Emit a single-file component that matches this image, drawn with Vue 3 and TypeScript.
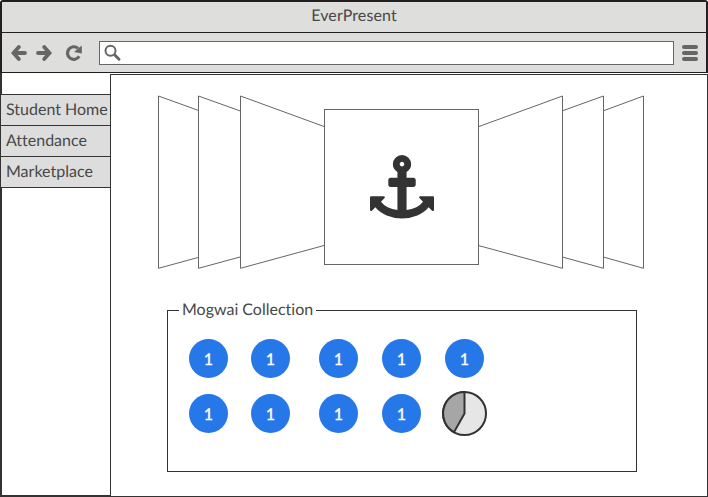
<script setup lang="ts">
import { ref } from 'vue'

interface Mogwai {
  id: number
  count: number
}

const title = ref('EverPresent')
const address = ref('')
const menu: string[] = ['Student Home', 'Attendance', 'Marketplace']
const mogwais: Mogwai[] = Array.from({ length: 9 }, (_, i) => ({ id: i, count: 1 }))
</script>

<template>
  <div class="browser">
    <header class="titlebar">{{ title }}</header>
    <div class="toolbar">
      <svg class="nav" width="17" height="18" viewBox="0 0 17 18">
        <path d="M7.800 3 L2.500 9 L7.800 15 M3 9 H14" />
      </svg>
      <svg class="nav forward" width="17" height="18" viewBox="0 0 17 18">
        <path d="M8.200 3 L13.500 9 L8.200 15 M13 9 H2" />
      </svg>
      <svg class="reload" width="18" height="18" viewBox="0 0 18 18">
        <path class="arc" d="M13 4.400 A6.300 6.300 0 1 0 14.200 12.200" />
        <path class="tip" d="M16.800 1.500 V9.500 L9 8 Z" />
      </svg>
      <label class="address">
        <svg width="18" height="18" viewBox="0 0 18 18">
          <circle cx="6.500" cy="6.800" r="5" />
          <path d="M10.800 11 L15 15.200" />
        </svg>
        <input v-model="address" type="text" />
      </label>
      <div class="burger"><i /><i /><i /></div>
    </div>
    <div class="body">
      <nav class="sidebar">
        <a v-for="item in menu" :key="item">{{ item }}</a>
      </nav>
      <main class="panel">
        <svg class="carousel" width="488" height="176" viewBox="157 94 488 176">
          <g class="card">
            <path d="M198 110.300 L158.500 96 V268.300 L198 257.500" />
            <path d="M240 110.900 L198.500 96 V268.300 L240 257" />
            <path d="M324 126.500 L240.500 96 V268.300 L324 245.500" />
            <path d="M604 110.600 L643.500 96 V268.300 L604 257.200" />
            <path d="M563 110.600 L603.500 96 V268.300 L563 257.200" />
            <path d="M479 126.500 L562.500 96 V268.300 L479 245.700" />
            <rect x="324.500" y="109.500" width="154" height="155" />
          </g>
          <path
            class="anchor"
            transform="translate(370 155) scale(.035714)"
            d="M960 256q0-26-19-45t-45-19-45 19-19 45 19 45 45 19 45-19 19-45zm832 928v352q0 22-20 30-8 2-12 2-12 0-23-9l-93-93q-119 143-318.500 226.500t-429.500 83.500-429.500-83.500-318.500-226.500l-93 93q-9 9-23 9-4 0-12-2-20-8-20-30v-352q0-14 9-23t23-9h352q22 0 30 20 8 19-7 35l-100 100q67 91 189.500 153.500t271.500 82.500v-647h-192q-26 0-45-19t-19-45v-128q0-26 19-45t45-19h192v-163q-58-34-93-92.500t-35-128.500q0-106 75-181t181-75 181 75 75 181q0 70-35 128.500t-93 92.500v163h192q26 0 45 19t19 45v128q0 26-19 45t-45 19h-192v647q149-20 271.500-82.500t189.500-153.500l-100-100q-15-16-7-35 8-20 30-20h352q14 0 23 9t9 23z"
          />
        </svg>
        <section class="collection">
          <h2>Mogwai Collection</h2>
          <div class="grid">
            <span v-for="m in mogwais" :key="m.id" class="dot">{{ m.count }}</span>
            <svg class="pie" width="45" height="45" viewBox="0 0 45 45">
              <circle cx="22.500" cy="22.500" r="21.500" />
              <path d="M22.500 22.500 L12 41.200 A21.500 21.500 0 0 1 22.500 1 Z" />
            </svg>
          </div>
        </section>
      </main>
    </div>
  </div>
</template>

<style>
body {
  background: #fff;
}
</style>

<style scoped>
.browser {
  box-sizing: border-box;
  width: 708px;
  height: 497px;
  display: flex;
  flex-direction: column;
  font-family: Lato, "Liberation Sans", sans-serif;
  font-size: 16px;
  font-variant-ligatures: none;
  text-rendering: geometricPrecision;
  color: #484848;
  background: #fff;
  border-top: 2px solid #231f20;
  border-radius: 3px 3px 0 0;
}
.titlebar {
  box-sizing: border-box;
  height: 31px;
  line-height: 28px;
  text-align: center;
  letter-spacing: .1px;
  background: #dededc;
  border: solid #231f20;
  border-width: 0 2px 1px;
}
.toolbar {
  box-sizing: border-box;
  height: 40px;
  display: flex;
  align-items: center;
  padding: 0 8px 0 9px;
  background: #dededc;
  border: solid #231f20;
  border-width: 0 2px 1px;
}
.nav {
  fill: none;
  stroke: #666;
  stroke-width: 3.800;
  stroke-linecap: round;
  stroke-linejoin: miter;
}
.forward {
  margin-left: 8px;
}
.reload {
  margin-left: 12px;
}
.arc {
  fill: none;
  stroke: #666;
  stroke-width: 3.200;
}
.tip {
  fill: #666;
}
.address {
  box-sizing: border-box;
  width: 575px;
  height: 24px;
  margin-left: 16px;
  padding-left: 4px;
  display: flex;
  align-items: center;
  border: 1px solid #666;
  background: #fff;
}
.address svg {
  fill: none;
  stroke: #666;
  stroke-width: 2;
  stroke-linecap: round;
}
.address path {
  stroke-width: 3;
}
.address input {
  flex: 1;
  min-width: 0;
  padding: 0 6px;
  border: 0;
  outline: 0;
  background: none;
  font: inherit;
  color: inherit;
}
.burger {
  width: 16px;
  margin-left: 8px;
  display: grid;
  gap: 2px;
}
.burger i {
  height: 4px;
  border-radius: 2px;
  background: #666;
}
.body {
  flex: 1;
  display: flex;
}
.sidebar {
  box-sizing: border-box;
  width: 110px;
  padding-top: 21px;
  border-bottom: 2px solid #333;
  background: linear-gradient(#333, #333) left / 2px 100% no-repeat;
}
.sidebar a {
  display: block;
  box-sizing: border-box;
  height: 31px;
  padding-left: 5px;
  line-height: 30px;
  white-space: nowrap;
  background: #ddd;
  border: solid #333;
  border-width: 1px 0 0 1px;
}
.sidebar a:last-child {
  height: 32px;
  border-bottom-width: 1px;
}
.panel {
  box-sizing: border-box;
  flex: 1;
  margin-top: 1px;
  padding: 19px 0 0 46px;
  border: 1px solid #333;
}
.card {
  fill: #fff;
  stroke: #666;
  stroke-width: 1;
}
.anchor {
  fill: #333;
}
.carousel {
  display: block;
}
.collection {
  box-sizing: border-box;
  width: 470px;
  height: 162px;
  margin: 40px 0 0 10px;
  border: 1px solid #333;
}
h2 {
  box-sizing: border-box;
  width: 137px;
  height: 20px;
  margin: -11px 0 0 11px;
  padding: 0 3px;
  font-size: 16px;
  font-weight: 400;
  line-height: 20px;
  white-space: nowrap;
  background: #fff;
}
.grid {
  margin: 19px 0 0 21px;
  display: grid;
  grid-template-columns: 62px 68px 63px 63px 39px;
  grid-template-rows: 39px 39px;
  row-gap: 16px;
}
.dot {
  width: 39px;
  height: 39px;
  border-radius: 50%;
  background: #2677e8;
  color: #fff;
  -webkit-text-stroke: .35px #fff;
  text-align: center;
  line-height: 42px;
}
.pie {
  margin: -3px;
}
.pie circle,
.pie path {
  fill: #e6e6e6;
  stroke: #333;
  stroke-width: 2;
}
.pie path {
  fill: #a6a6a6;
}
</style>
